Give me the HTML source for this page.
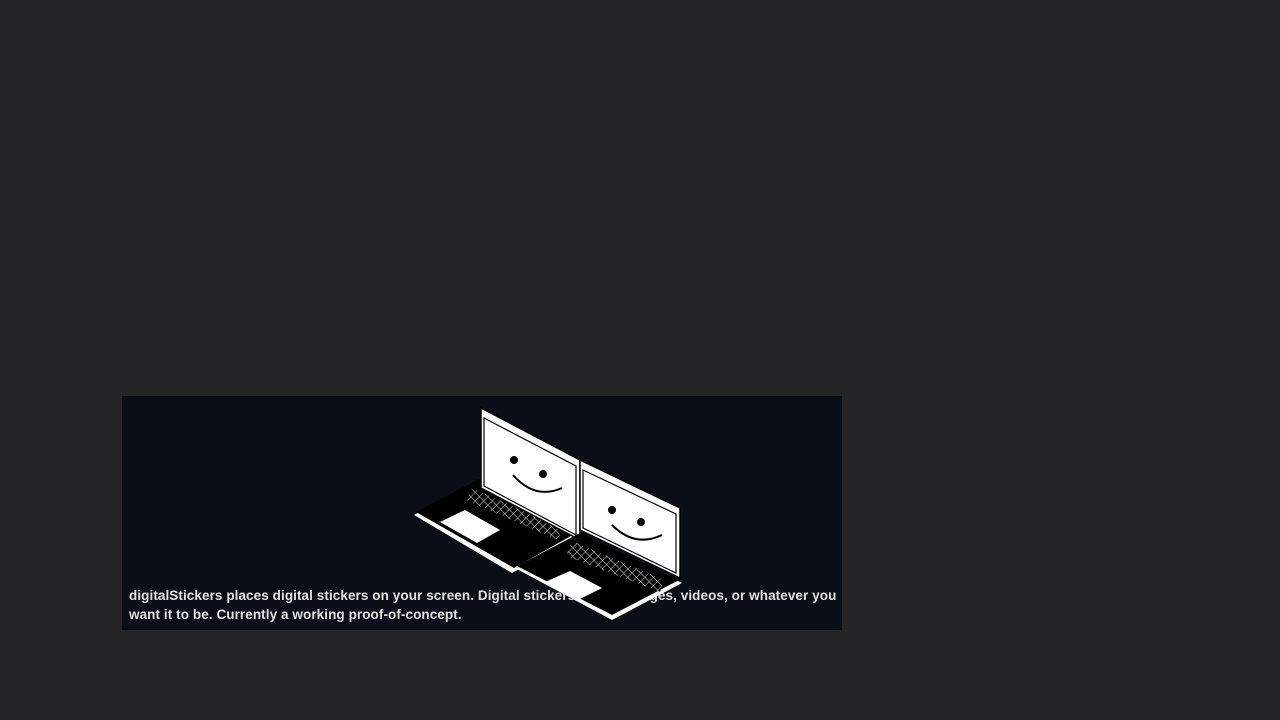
<!DOCTYPE html>
<html><head><style>
body{margin:0;width:1280px;height:720px;background:#252528;position:relative;overflow:hidden;font-family:"Liberation Sans",sans-serif}
.card{position:absolute;left:122px;top:396px;width:720px;height:234px;background:#0a0e17}
.t{position:absolute;left:7px;top:190px;width:714px;font-size:13.5px;font-weight:bold;color:#e2e2e2;line-height:19px;letter-spacing:0.08px;white-space:nowrap}
svg{position:absolute;left:0;top:0}
</style></head><body>
<div class="card">
<div class="t">digitalStickers places digital stickers on your screen. Digital stickers can be images, videos, or whatever you<br>want it to be. Currently a working proof-of-concept.</div>
<svg width="720" height="234" viewBox="122 396 720 234">
<defs>
<pattern id="kb" width="6" height="6" patternUnits="userSpaceOnUse" patternTransform="rotate(45)">
<rect width="6" height="6" fill="#000"/>
<path d="M0 0H6M0 0V6" stroke="#ddd" stroke-width="1"/>
</pattern>
</defs>
<!-- laptop 1 -->
<polygon points="414,515 481,480 580,535 512,573" fill="#fff"/>
<polygon points="416,512 481,478 578,532 514,568" fill="#000"/>
<polygon points="440,522 465,510 500,530 477,543" fill="#fff"/>
<polygon points="466,500 472,488 562,528 558,540" fill="url(#kb)"/>
<polygon points="481,408 580,460 580,540 481,488" fill="#fff" stroke="#000" stroke-width="1.5"/>
<polygon points="484,418 576,466 576,535 484,486" fill="#fff" stroke="#000" stroke-width="1.2"/>
<circle cx="514" cy="460" r="4" fill="#000"/><circle cx="543" cy="474" r="4" fill="#000"/>
<path d="M513 475 Q535 500 562 488" stroke="#000" stroke-width="2" fill="none"/>
<!-- laptop 2 -->
<polygon points="515,568 580,534 682,583 612,620" fill="#fff"/>
<polygon points="517,566 580,533 679,580 612,615" fill="#000"/>
<polygon points="545,582 570,571 602,588 578,600" fill="#fff"/>
<polygon points="566,556 572,541 664,580 660,592" fill="url(#kb)"/>
<polygon points="580,460 680,508 680,578 580,530" fill="#fff" stroke="#000" stroke-width="1.5"/>
<polygon points="583,470 676,514 676,573 583,528" fill="#fff" stroke="#000" stroke-width="1.2"/>
<circle cx="612" cy="510" r="4" fill="#000"/><circle cx="641" cy="522" r="4" fill="#000"/>
<path d="M612 525 Q635 548 662 535" stroke="#000" stroke-width="2" fill="none"/>
</svg>
</div>
</body></html>
